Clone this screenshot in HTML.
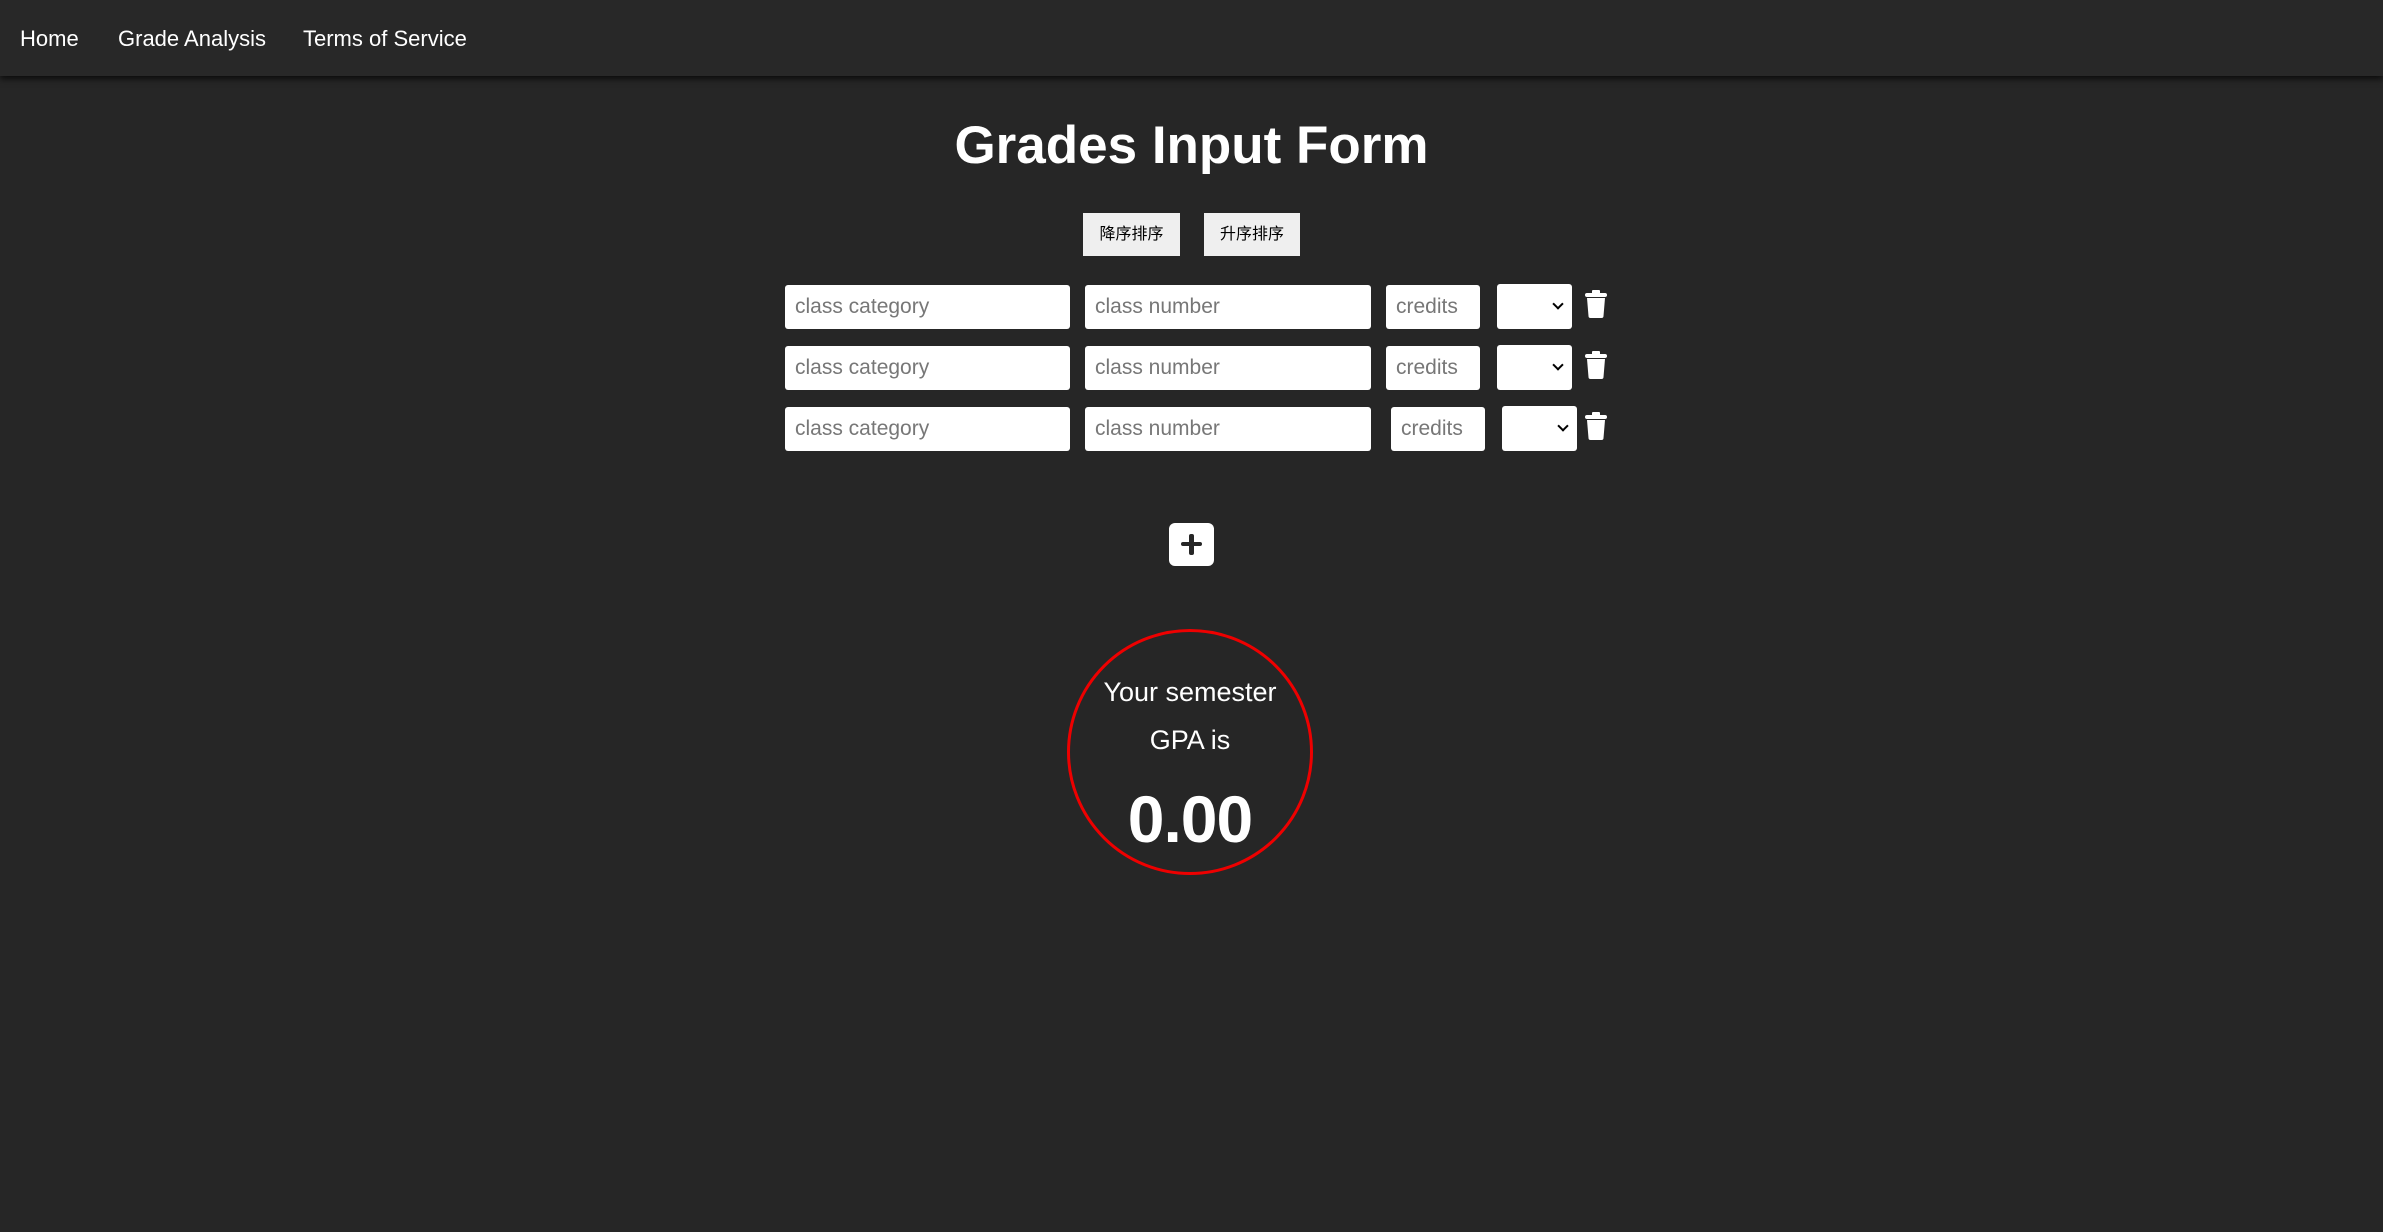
<!DOCTYPE html>
<html><head><meta charset="utf-8"><style>
body{margin:0;width:2383px;height:1232px;background:#262626;font-family:"Liberation Sans","Noto Sans CJK SC",sans-serif;position:relative;overflow:hidden;color:#fff}
.nav{position:absolute;left:0;top:0;width:2383px;height:76px;background:#282828;box-shadow:0 3px 6px rgba(0,0,0,.7)}
.nav span{position:absolute;top:26px;font-size:22px;color:#fff}
.a{position:absolute}
h1{position:absolute;left:0;width:2383px;top:111px;margin:0;text-align:center;font-size:53px;font-weight:bold;line-height:70px}
.btn{position:absolute;top:213px;height:43px;background:#efefef;color:#000;font-size:16px;text-align:center;line-height:43px}
.in{position:absolute;height:44px;background:#fff;border-radius:3px;color:#777;font-size:21px;line-height:44px;padding-left:10px;box-sizing:border-box;overflow:hidden;white-space:nowrap}
.sel{position:absolute;height:45px;width:75px;background:#fff;border-radius:3px}
.sel:after{content:"";position:absolute;right:10px;top:16px;width:6px;height:6px;border-right:2px solid #000;border-bottom:2px solid #000;transform:rotate(45deg)}
.trash{position:absolute;width:24px;height:28px}
</style></head><body>
<div class="nav"><span style="left:20px">Home</span><span style="left:118px">Grade Analysis</span><span style="left:303px">Terms of Service</span></div>
<h1>Grades Input Form</h1>
<div class="btn" style="left:1083px;width:97px">降序排序</div>
<div class="btn" style="left:1204px;width:96px">升序排序</div>

<div class="in" style="left:785px;top:285px;width:285px">class category</div>
<div class="in" style="left:1085px;top:285px;width:286px">class number</div>
<div class="in" style="left:1386px;top:285px;width:94px">credits</div>
<div class="sel" style="left:1497px;top:284px"></div>
<svg class="trash" style="left:1584px;top:290px" viewBox="0 0 24 28"><rect x="1" y="3" width="22" height="4" rx="2" fill="#fff"/><rect x="8" y="0" width="8" height="4" rx="1" fill="#fff"/><path d="M3 8h18l-1.5 18a2 2 0 0 1-2 2h-11a2 2 0 0 1-2-2z" fill="#fff"/></svg>

<div class="in" style="left:785px;top:346px;width:285px">class category</div>
<div class="in" style="left:1085px;top:346px;width:286px">class number</div>
<div class="in" style="left:1386px;top:346px;width:94px">credits</div>
<div class="sel" style="left:1497px;top:345px"></div>
<svg class="trash" style="left:1584px;top:351px" viewBox="0 0 24 28"><rect x="1" y="3" width="22" height="4" rx="2" fill="#fff"/><rect x="8" y="0" width="8" height="4" rx="1" fill="#fff"/><path d="M3 8h18l-1.5 18a2 2 0 0 1-2 2h-11a2 2 0 0 1-2-2z" fill="#fff"/></svg>

<div class="in" style="left:785px;top:407px;width:285px">class category</div>
<div class="in" style="left:1085px;top:407px;width:286px">class number</div>
<div class="in" style="left:1391px;top:407px;width:94px">credits</div>
<div class="sel" style="left:1502px;top:406px"></div>
<svg class="trash" style="left:1584px;top:412px" viewBox="0 0 24 28"><rect x="1" y="3" width="22" height="4" rx="2" fill="#fff"/><rect x="8" y="0" width="8" height="4" rx="1" fill="#fff"/><path d="M3 8h18l-1.5 18a2 2 0 0 1-2 2h-11a2 2 0 0 1-2-2z" fill="#fff"/></svg>

<div class="a" style="left:1169px;top:523px;width:45px;height:43px;background:#fff;border-radius:6px"></div>
<div class="a" style="left:1181px;top:542px;width:21px;height:4px;background:#262626;border-radius:2px"></div>
<div class="a" style="left:1189px;top:534px;width:5px;height:21px;background:#262626;border-radius:2px"></div>

<div class="a" style="left:1067px;top:629px;width:246px;height:246px;border:3px solid #e00;border-radius:50%;box-sizing:border-box"></div>
<div class="a" style="left:1040px;width:300px;top:677px;text-align:center;font-size:27px">Your semester</div>
<div class="a" style="left:1040px;width:300px;top:725px;text-align:center;font-size:27px">GPA is</div>
<div class="a" style="left:1040px;width:300px;top:781px;text-align:center;font-size:66px;font-weight:bold;letter-spacing:-1px">0.00</div>
</body></html>
